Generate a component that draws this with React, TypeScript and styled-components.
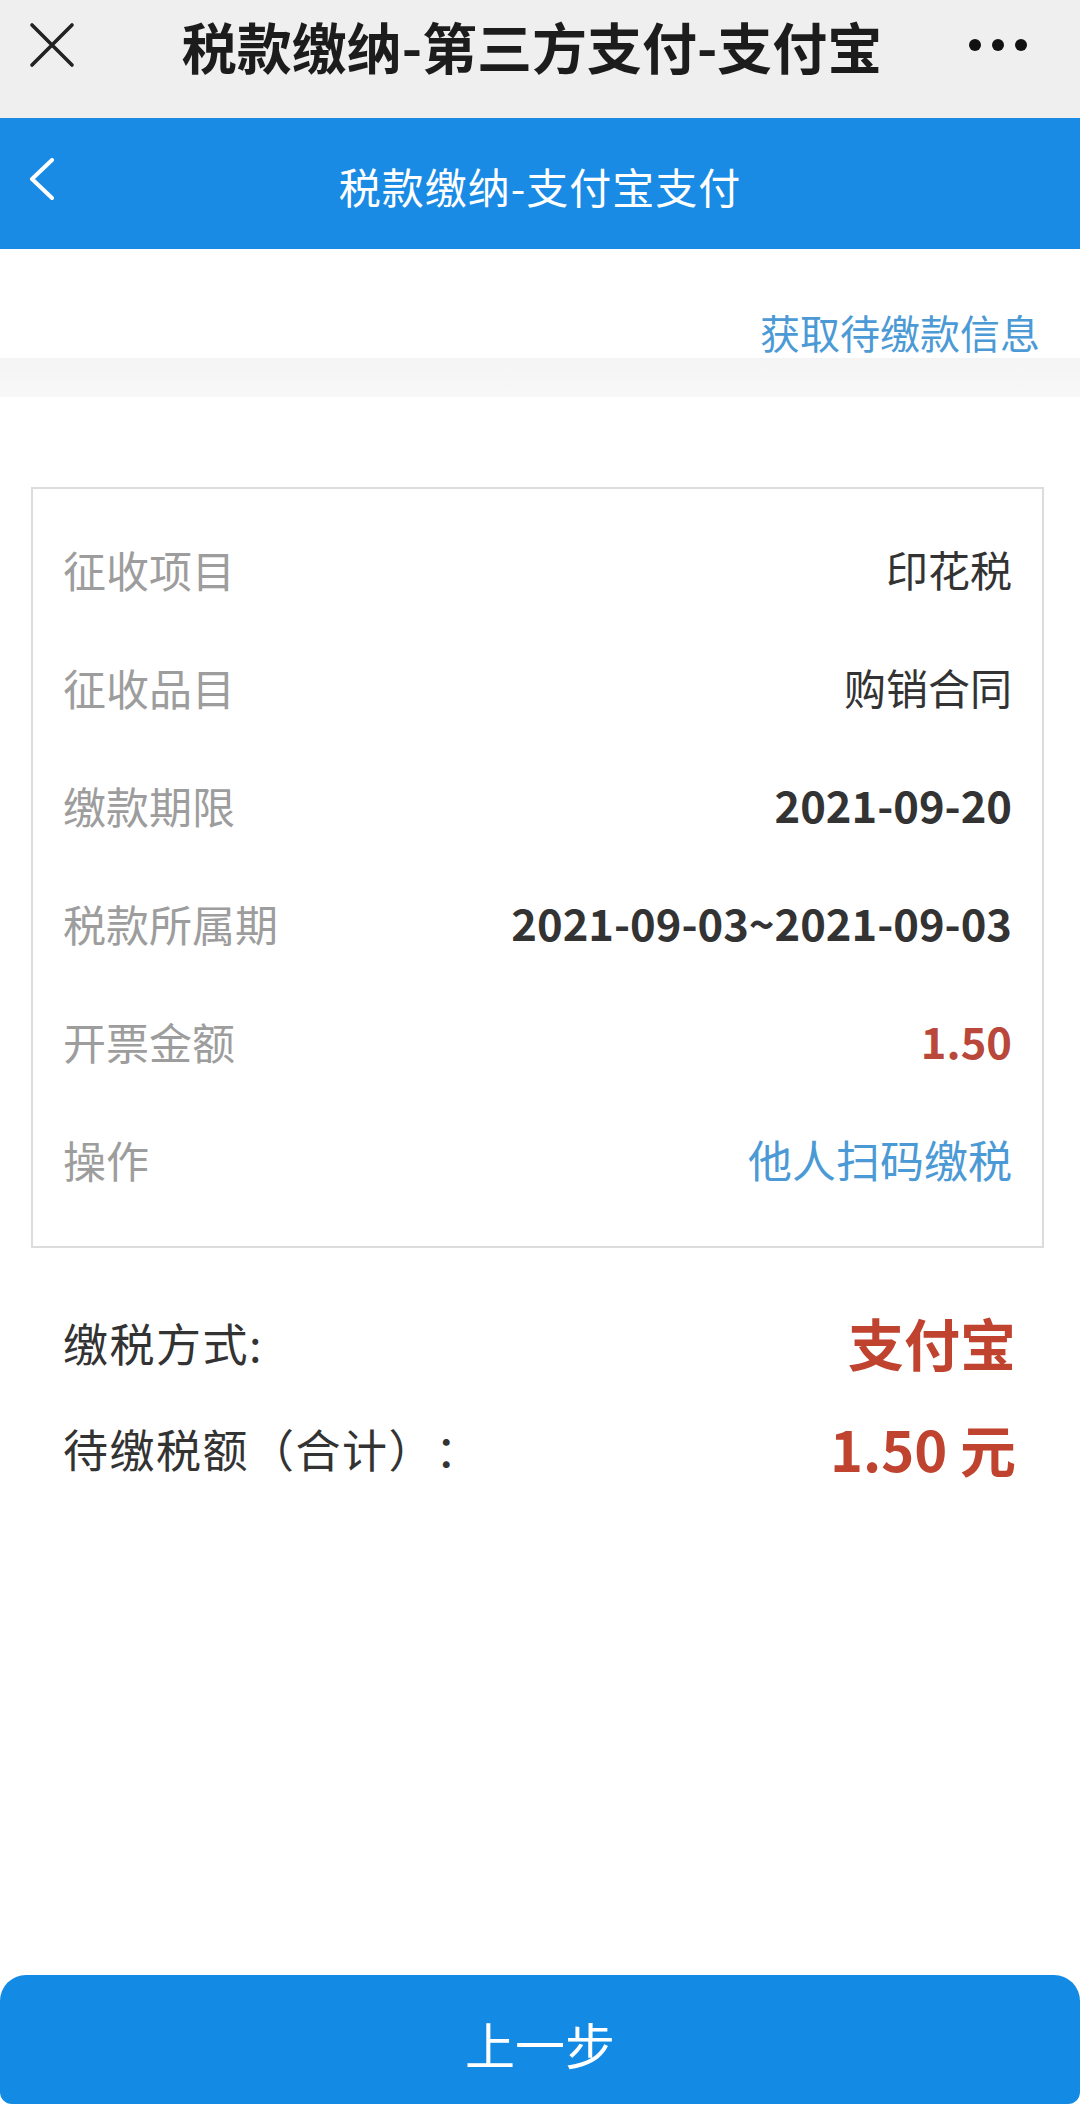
import React from "react";
import styled, { createGlobalStyle } from "styled-components";

const GlobalStyle = createGlobalStyle`
  html, body {
    margin: 0;
    padding: 0;
    background: #ffffff;
  }
  body {
    font-family: "Noto Sans CJK SC", "Noto Sans", sans-serif;
    -webkit-font-smoothing: antialiased;
    text-spacing-trim: space-all;
  }
  * { box-sizing: border-box; }
`;

const Page = styled.div`
  width: 1080px;
  height: 2104px;
  overflow: hidden;
  display: flex;
  flex-direction: column;
  background: #ffffff;
`;

const TopBar = styled.div`
  height: 118px;
  flex-shrink: 0;
  background: #efefef;
  display: flex;
  align-items: center;
  padding: 0 53px 28px 29px;
`;

const IconSlot = styled.div<{ $align: "start" | "end" }>`
  width: 100px;
  display: flex;
  justify-content: ${(p) => (p.$align === "start" ? "flex-start" : "flex-end")};
  align-items: center;
`;

const TopTitle = styled.div`
  flex: 1;
  text-align: center;
  font-size: 55px;
  font-weight: 700;
  color: #1c1c1c;
  line-height: 1;
  white-space: nowrap;
  padding-left: 8px;
`;

const Dots = styled.div`
  display: flex;
  gap: 11px;
`;

const Dot = styled.span`
  width: 12px;
  height: 12px;
  border-radius: 50%;
  background: #111;
`;

const Header = styled.div`
  height: 131px;
  flex-shrink: 0;
  background: #1a8be5;
  display: flex;
  align-items: center;
  position: relative;
  padding: 0 29px;
`;

const BackIcon = styled.div`
  position: absolute;
  left: 29px;
  top: 40px;
  display: flex;
`;

const HeaderTitle = styled.div`
  flex: 1;
  text-align: center;
  color: #ffffff;
  font-size: 42px;
  line-height: 1;
  padding-top: 4px;
  letter-spacing: 1px;
`;

const LinkBar = styled.div`
  height: 109px;
  flex-shrink: 0;
  display: flex;
  justify-content: flex-end;
  align-items: flex-end;
  padding: 0 40px 6px 0;
`;

const FetchLink = styled.a`
  font-size: 40px;
  line-height: 1;
  color: #4b9ad6;
  text-decoration: none;
`;

const Band = styled.div`
  height: 39px;
  flex-shrink: 0;
  background: linear-gradient(to bottom, #f4f4f4, #f8f8f8);
`;

const Card = styled.div`
  margin: 90px 36px 0 31px;
  border: 2px solid #dcdcdc;
  padding: 21px 30px 28px 30px;
  display: flex;
  flex-direction: column;
`;

const Row = styled.div`
  height: 118px;
  display: flex;
  align-items: center;
  justify-content: space-between;
`;

const Label = styled.span`
  font-size: 43px;
  color: #9d9d9d;
  line-height: 1;
`;

type Tone = "plain" | "bold" | "red" | "link";

const Value = styled.span<{ $tone: Tone }>`
  font-size: ${(p) => (p.$tone === "link" ? "44px" : p.$tone === "plain" ? "42px" : "43.5px")};
  line-height: 1;
  font-weight: ${(p) => (p.$tone === "bold" || p.$tone === "red" ? 700 : 400)};
  color: ${(p) =>
    p.$tone === "red" ? "#b9473a" : p.$tone === "link" ? "#4b9ad6" : "#333333"};
`;

const Summary = styled.div`
  margin-top: 41px;
  padding: 0 64px 0 63px;
  display: flex;
  flex-direction: column;
`;

const SummaryRow = styled.div`
  height: 106px;
  display: flex;
  align-items: center;
  justify-content: space-between;
`;

const SummaryLabel = styled.span`
  font-size: 45px;
  color: #333333;
  line-height: 1;
  letter-spacing: 1.5px;
`;

const SummaryValue = styled.span`
  font-size: 56px;
  font-weight: 700;
  color: #c0432f;
  line-height: 1;
`;

const PrevButton = styled.button`
  margin-top: auto;
  height: 129px;
  flex-shrink: 0;
  width: 100%;
  border: none;
  border-radius: 26px 26px 12px 12px;
  background: #138be4;
  color: #ffffff;
  font-family: "Noto Sans CJK SC", "Noto Sans", sans-serif;
  font-size: 50px;
  line-height: 1;
  display: flex;
  align-items: center;
  justify-content: center;
  padding: 6px 0 0 0;
  cursor: pointer;
`;

const rows: { label: string; value: string; tone: Tone }[] = [
  { label: "征收项目", value: "印花税", tone: "plain" },
  { label: "征收品目", value: "购销合同", tone: "plain" },
  { label: "缴款期限", value: "2021-09-20", tone: "bold" },
  { label: "税款所属期", value: "2021-09-03~2021-09-03", tone: "bold" },
  { label: "开票金额", value: "1.50", tone: "red" },
  { label: "操作", value: "他人扫码缴税", tone: "link" },
];

const CloseIcon = () => (
  <svg width="46" height="46" viewBox="0 0 46 46">
    <path d="M3 3 L43 43 M43 3 L3 43" stroke="#222" strokeWidth="3.6" strokeLinecap="round" fill="none" />
  </svg>
);

const ChevronLeft = () => (
  <svg width="26" height="42" viewBox="0 0 26 42">
    <path d="M23 2 L3 21 L23 40" stroke="#ffffff" strokeWidth="4" strokeLinecap="round" strokeLinejoin="round" fill="none" />
  </svg>
);

export default function App() {
  return (
    <>
      <GlobalStyle />
      <Page>
        <TopBar>
          <IconSlot $align="start">
            <CloseIcon />
          </IconSlot>
          <TopTitle>税款缴纳-第三方支付-支付宝</TopTitle>
          <IconSlot $align="end">
            <Dots>
              <Dot />
              <Dot />
              <Dot />
            </Dots>
          </IconSlot>
        </TopBar>
        <Header>
          <BackIcon>
            <ChevronLeft />
          </BackIcon>
          <HeaderTitle>税款缴纳-支付宝支付</HeaderTitle>
        </Header>
        <LinkBar>
          <FetchLink href="#">获取待缴款信息</FetchLink>
        </LinkBar>
        <Band />
        <Card>
          {rows.map((r) => (
            <Row key={r.label}>
              <Label>{r.label}</Label>
              <Value $tone={r.tone}>{r.value}</Value>
            </Row>
          ))}
        </Card>
        <Summary>
          <SummaryRow>
            <SummaryLabel>缴税方式:</SummaryLabel>
            <SummaryValue>支付宝</SummaryValue>
          </SummaryRow>
          <SummaryRow>
            <SummaryLabel>待缴税额（合计）：</SummaryLabel>
            <SummaryValue>1.50 元</SummaryValue>
          </SummaryRow>
        </Summary>
        <PrevButton>上一步</PrevButton>
      </Page>
    </>
  );
}
